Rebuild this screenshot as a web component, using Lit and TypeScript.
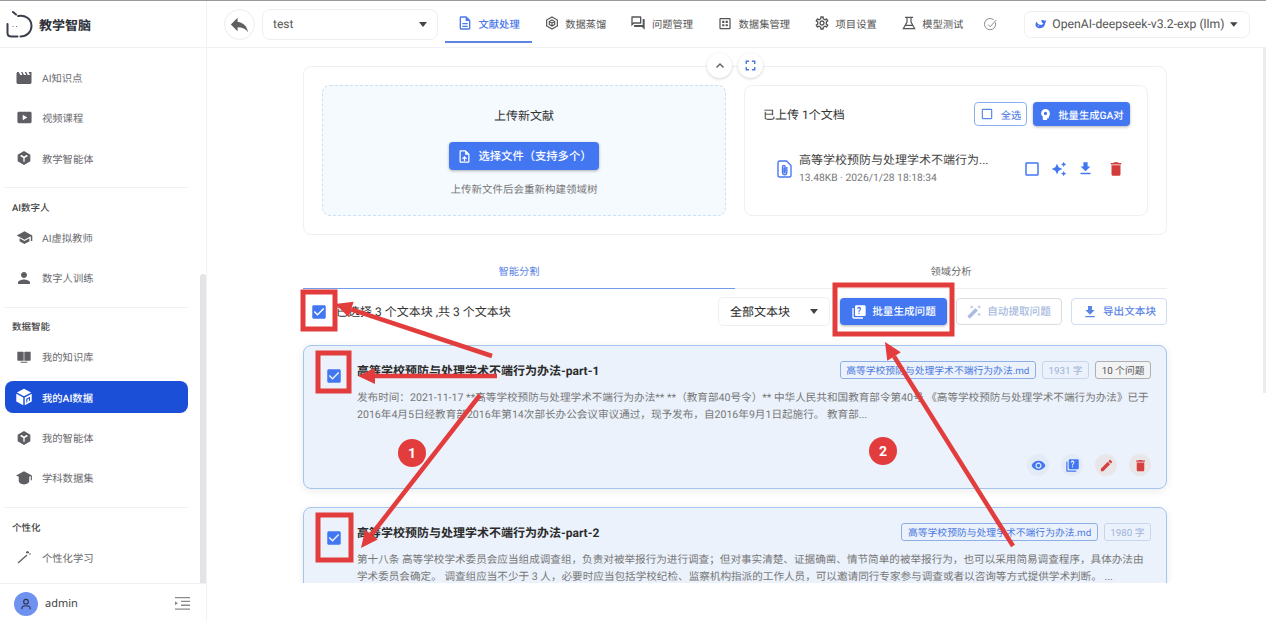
import { LitElement, css, html, svg } from 'lit';
import { customElement } from 'lit/decorators.js';

// material-style icon, filled path on a 24 box
const icon = (d: string, size = 16, color = 'currentColor') => html`
  <svg class="ic" width=${size} height=${size} viewBox="0 0 24 24" fill=${color}>${svg`<path d=${d}></path>`}</svg>
`;

const P = {
  movie: 'M18 4l2 4h-3l-2-4h-2l2 4h-3l-2-4H8l2 4H7L5 4H4c-1.1 0-1.99.9-1.99 2L2 18c0 1.1.9 2 2 2h16c1.1 0 2-.9 2-2V4h-4z',
  play: 'M20 4H4c-1.1 0-2 .9-2 2v12c0 1.1.9 2 2 2h16c1.1 0 2-.9 2-2V6c0-1.1-.9-2-2-2zM9.5 16v-8l6.5 4-6.5 4z',
  hexY: 'M12 1.5 21.5 7v10L12 22.5 2.5 17V7zM7.6 7.2 6.4 9.2 11 12v5.6h2V12l4.6-2.8-1.2-2L12 9.9z',
  school: 'M5 13.18v4L12 21l7-3.82v-4L12 17l-7-3.82zM12 3 1 9l11 6 9-4.91V17h2V9L12 3z',
  person: 'M12 12c2.21 0 4-1.79 4-4s-1.79-4-4-4-4 1.79-4 4 1.79 4 4 4zm0 2c-2.67 0-8 1.34-8 4v2h16v-2c0-2.66-5.33-4-8-4z',
  book: 'M2 4h8.5c.6 0 1 .4 1 1v12.5H3c-.6 0-1-.4-1-1zM22 4h-8.5c-.6 0-1 .4-1 1v12.5H21c.6 0 1-.4 1-1zM7 19h10v1.6H7z',
  cube: 'M12 1 21.500 6 12 11 2.500 6zM1.700 7.600l9.300 5V23l-9.300-5zM22.300 7.600V18L13 23V12.600zM20 11.500l-5 2.700v5.300l1.500-.8v-3.500l2-1.100v3.500l1.500-.8z',
  capFull: 'M12 3 1.500 8.500 5 10.400V16c0 2 3 4.500 7 4.500s7-2.500 7-4.500v-5.600l2-1V15h1.500V8.500z',
  reply: 'M10 9V5l-7 7 7 7v-4.100c5 0 8.500 1.600 11 5.100-1-5-4-10-11-11z',
  doc: 'M8 16h8v2H8zm0-4h8v2H8zm6-10H6c-1.100 0-2 .9-2 2v16c0 1.100.89 2 1.990 2H18c1.100 0 2-.9 2-2V8l-6-6zm4 18H6V4h7v5h5v11z',
  qa: 'M15 4v7H5.170L4 12.170V4h11m1-2H3c-.55 0-1 .45-1 1v14l4-4h10c.55 0 1-.45 1-1V3c0-.55-.45-1-1-1zm5 4h-2v9H6v2c0 .55.45 1 1 1h11l4 4V7c0-.55-.45-1-1-1z',
  grid: 'M19 3H5c-1.100 0-2 .9-2 2v14c0 1.100.9 2 2 2h14c1.100 0 2-.9 2-2V5c0-1.100-.9-2-2-2zm0 16H5V5h14v14zM7.500 7.500h3.500V11H7.500zM13 7.500h3.500V11H13zM7.500 13h3.500v3.500H7.500zM13 13h3.500v3.500H13z',
  gear: 'M19.430 12.980c.04-.32.07-.64.07-.98 0-.34-.03-.66-.07-.98l2.110-1.650c.19-.15.24-.42.12-.64l-2-3.460c-.09-.16-.26-.25-.44-.25-.06 0-.12.01-.17.03l-2.490 1c-.52-.4-1.080-.73-1.690-.98l-.38-2.650C14.460 2.180 14.250 2 14 2h-4c-.25 0-.46.18-.49.42l-.38 2.650c-.61.25-1.170.59-1.690.98l-2.490-1c-.06-.02-.12-.03-.18-.03-.17 0-.34.09-.43.25l-2 3.460c-.13.22-.07.49.12.64l2.110 1.650c-.04.32-.07.65-.07.98 0 .33.03.66.07.98l-2.110 1.650c-.19.15-.24.42-.12.64l2 3.460c.09.16.26.25.44.25.06 0 .12-.01.17-.03l2.490-1c.52.4 1.080.73 1.690.98l.38 2.650c.03.24.24.42.49.42h4c.25 0 .46-.18.49-.42l.38-2.650c.61-.25 1.170-.59 1.690-.98l2.490 1c.06.02.12.03.18.03.17 0 .34-.09.43-.25l2-3.460c.12-.22.07-.49-.12-.64l-2.110-1.650zm-1.980-1.710c.04.31.05.52.05.73 0 .21-.02.43-.05.73l-.14 1.130.89.7 1.080.84-.7 1.210-1.270-.51-1.040-.42-.9.68c-.43.32-.84.56-1.250.73l-1.060.43-.16 1.130-.2 1.350h-1.400l-.19-1.350-.16-1.130-1.060-.43c-.43-.18-.83-.41-1.230-.71l-.91-.7-1.060.43-1.270.51-.7-1.210 1.080-.84.89-.7-.14-1.130c-.03-.31-.05-.54-.05-.74s.02-.43.05-.73l.14-1.130-.89-.7-1.080-.84.7-1.210 1.270.51 1.040.42.9-.68c.43-.32.84-.56 1.250-.73l1.060-.43.16-1.130.2-1.350h1.390l.19 1.350.16 1.130 1.060.43c.43.18.83.41 1.230.71l.91.7 1.060-.43 1.270-.51.7 1.210-1.070.85-.89.7.14 1.130zM12 8c-2.210 0-4 1.790-4 4s1.790 4 4 4 4-1.790 4-4-1.790-4-4-4zm0 6c-1.100 0-2-.9-2-2s.9-2 2-2 2 .9 2 2-.9 2-2 2z',
  full: 'M7 14H5v5h5v-2H7v-3zm-2-4h2V7h3V5H5v5zm12 7h-3v2h5v-5h-2v3zM14 5v2h3v3h2V5h-5z',
  upload: 'M14 2H6c-1.100 0-1.990.9-1.990 2L4 20c0 1.100.89 2 1.990 2H18c1.100 0 2-.9 2-2V8l-6-6zm4 18H6V4h7v5h5v11zM8 15.010l1.410 1.410L11 14.840V19h2v-4.160l1.590 1.590L16 15.010 12.010 11 8 15.010z',
  bulb: 'M12 2c-4.400 0-8 3.400-8 7.800 0 2.700 1.300 4.700 3 6.100V21c0 .6.4 1 1 1h6c.6 0 1-.4 1-1v-2h1.500c1 0 1.800-.8 1.800-1.800V14.500H20l-.3-1.500C20 12 20 11 20 9.800 20 5.400 16.400 2 12 2zm0 5a3 3 0 1 1 0 6 3 3 0 0 1 0-6z',
  box: 'M19 5v14H5V5h14m0-2H5c-1.100 0-2 .9-2 2v14c0 1.100.9 2 2 2h14c1.100 0 2-.9 2-2V5c0-1.100-.9-2-2-2z',
  checked: 'M19 3H5c-1.110 0-2 .9-2 2v14c0 1.100.89 2 2 2h14c1.110 0 2-.9 2-2V5c0-1.100-.89-2-2-2zm-9 14l-5-5 1.410-1.410L10 14.170l7.590-7.590L19 8l-9 9z',
  sparkle: 'M19 9l1.250-2.750L23 5l-2.750-1.250L19 1l-1.250 2.750L15 5l2.750 1.250L19 9zm-7.500.5L9 4 6.500 9.500 1 12l5.500 2.500L9 20l2.500-5.500L17 12l-5.500-2.500zM19 15l-1.250 2.750L15 19l2.750 1.250L19 23l1.250-2.750L23 19l-2.750-1.250L19 15z',
  download: 'M19 9h-4V3H9v6H5l7 7 7-7zM5 18v2h14v-2H5z',
  trash: 'M6 19c0 1.100.9 2 2 2h8c1.100 0 2-.9 2-2V7H6v12zM19 4h-3.500l-1-1h-5l-1 1H5v2h14V4z',
  quiz: 'M4 6H2v14c0 1.100.9 2 2 2h14v-2H4V6zm16-4H8c-1.100 0-2 .9-2 2v12c0 1.100.9 2 2 2h12c1.100 0 2-.9 2-2V4c0-1.100-.9-2-2-2zm-7.990 13c-.59 0-1.050-.47-1.050-1.050 0-.59.47-1.040 1.050-1.040.59 0 1.040.45 1.040 1.040-.01.58-.45 1.050-1.040 1.050zm2.500-6.170c-.63.93-1.230 1.210-1.560 1.810-.13.24-.18.4-.18 1.180h-1.520c0-.41-.06-1.080.26-1.650.41-.73 1.180-1.160 1.630-1.800.48-.68.21-1.940-1.140-1.940-.88 0-1.320.67-1.500 1.230l-1.370-.57C9.720 4.550 10.820 4 12.010 4c1.090 0 2.130.54 2.650 1.340.37.58.58 1.530.1 2.490z',
  eye: 'M12 4.500C7 4.500 2.730 7.610 1 12c1.730 4.390 6 7.500 11 7.500s9.270-3.110 11-7.500c-1.730-4.390-6-7.500-11-7.500zM12 17c-2.760 0-5-2.240-5-5s2.240-5 5-5 5 2.240 5 5-2.240 5-5 5zm0-8c-1.660 0-3 1.340-3 3s1.340 3 3 3 3-1.340 3-3-1.340-3-3-3z',
  edit: 'M3 17.250V21h3.750L17.810 9.940l-3.750-3.750L3 17.250zM20.710 7.040c.39-.39.39-1.020 0-1.410l-2.340-2.340c-.39-.39-1.020-.39-1.410 0l-1.830 1.830 3.750 3.750 1.830-1.830z',
  wand: 'M7.500 5.600 10 7 8.600 4.500 10 2 7.500 3.400 5 2l1.400 2.500L5 7zm12 9.800L17 14l1.400 2.500L17 19l2.500-1.400L22 19l-1.400-2.500L22 14zM22 2l-2.500 1.400L17 2l1.400 2.500L17 7l2.500-1.400L22 7l-1.400-2.500zm-7.630 5.290a1 1 0 0 0-1.410 0L1.290 18.960a1 1 0 0 0 0 1.410l2.340 2.340c.39.39 1.020.39 1.410 0L16.700 11.050a1 1 0 0 0 0-1.410l-2.330-2.350z',
};

const caret = html`<svg class="caret" width="8" height="5" viewBox="0 0 8 5"><path d="M0 0h8L4 5z" fill="#444"></path></svg>`;

const logo = html`
  <svg width="27" height="27" viewBox="0 0 27 27" fill="none" stroke="#3b3f4a" stroke-width="2" stroke-linecap="round">
    <path d="M12 5c7-1.500 13.500 3 13.500 10 0 6-5 10.500-11 10.500"></path>
    <path d="M1.500 13v9c0 2.500 1.500 3.500 4 3.500h6"></path>
    <path d="M7 1 10 3.500"></path>
    <path d="M7 15.500h.1M10.500 15.500h.1" stroke-width=".8"></path>
  </svg>
`;

const distill = html`
  <svg class="ic" width="16" height="16" viewBox="0 0 24 24" fill="none" stroke="currentColor" stroke-width="1.800">
    <path d="M12 3 20 7.500v9L12 21l-8-4.500v-9z"></path>
    <path d="M8 9.800 12 7.500l4 2.300v4.400l-4 2.300-4-2.300zM8 9.800l4 2.300 4-2.300M12 12.100v4.400"></path>
  </svg>
`;

const flask = html`
  <svg class="ic" width="16" height="16" viewBox="0 0 24 24" fill="none" stroke="currentColor" stroke-width="1.800">
    <path d="M6 3.500h12M9 3.500v7L3.500 20.500h17L15 10.500v-7M7 15.500h10"></path>
  </svg>
`;

const whale = html`
  <svg width="12" height="10" viewBox="0 0 24 20">
    <path
      fill="#4a6ff0"
      fill-rule="evenodd"
      d="M23.500 1.500c-1 .6-1.800 1.200-2.500 2C19 1.500 16 1 13.500 2 13 5 15 7.500 17.500 8.500c-1 2.500-3.500 4-7 3.200C7 11 5 8 3.500 5 1 7.500 0 11 2 14.500c2.500 4 8 5.500 13 3.500 4-1.700 6-5 6-8.500 1.500-2 2.500-4.500 2.500-8zM7 12.500a1.200 1.200 0 1 1 0 2.400 1.200 1.200 0 0 1 0-2.400z"
    ></path>
  </svg>
`;

const clip = html`
  <svg class="ic" width="15" height="18" viewBox="0 0 15 18" fill="none" stroke="#4a7af0" stroke-width="1.400">
    <path d="M1 2.500C1 1.600 1.600 1 2.500 1H9.500L14 5.500V15.500c0 .9-.6 1.500-1.500 1.500h-10C1.600 17 1 16.400 1 15.500z"></path>
    <path d="M9.800 7v5.500c0 3-4.300 3-4.300 0V6.800c0-1.800 2.600-1.800 2.600 0v5.400c0 .7-1 .7-1 0V7.500"></path>
  </svg>
`;

type NavItem = { label: string; icon: unknown; active?: boolean };
type NavGroup = { title?: string; items: NavItem[] };

const hexIcon = icon(P.hexY, 16);

const thinWand = html`
  <svg class="ic" width="16" height="16" viewBox="0 0 16 16" fill="none" stroke="currentColor" stroke-width="1.300">
    <path d="M2 14 11 6M11.500 2v2M10 3.500h3M14 4.500v1M13.500 5h1"></path>
  </svg>
`;

const nav: NavGroup[] = [
  {
    items: [
      { label: 'AI知识点', icon: icon(P.movie, 18) },
      { label: '视频课程', icon: icon(P.play, 17) },
      { label: '教学智能体', icon: hexIcon },
    ],
  },
  {
    title: 'AI数字人',
    items: [
      { label: 'AI虚拟教师', icon: icon(P.school, 17) },
      { label: '数字人训练', icon: icon(P.person, 18) },
    ],
  },
  {
    title: '数据智能',
    items: [
      { label: '我的知识库', icon: icon(P.book, 16) },
      { label: '我的AI数据', icon: icon(P.cube, 18), active: true },
      { label: '我的智能体', icon: hexIcon },
      { label: '学科数据集', icon: icon(P.capFull, 18) },
    ],
  },
  {
    title: '个性化',
    items: [{ label: '个性化学习', icon: thinWand }],
  },
];

const tabs = [
  { label: '文献处理', icon: icon(P.doc, 16), active: true },
  { label: '数据蒸馏', icon: distill },
  { label: '问题管理', icon: icon(P.qa, 16) },
  { label: '数据集管理', icon: icon(P.grid, 15) },
  { label: '项目设置', icon: icon(P.gear, 16) },
  { label: '模型测试', icon: flask },
];

const cards = [
  {
    title: '高等学校预防与处理学术不端行为办法-part-1',
    file: '高等学校预防与处理学术不端行为办法.md',
    words: '1931 字',
    questions: '10 个问题',
    lines: [
      '发布时间：2021-11-17 **高等学校预防与处理学术不端行为办法** **（教育部40号令）** 中华人民共和国教育部令第40号 《高等学校预防与处理学术不端行为办法》已于',
      '2016年4月5日经教育部2016年第14次部长办公会议审议通过，现予发布，自2016年9月1日起施行。 教育部...',
    ],
    actions: true,
  },
  {
    title: '高等学校预防与处理学术不端行为办法-part-2',
    file: '高等学校预防与处理学术不端行为办法.md',
    words: '1980 字',
    lines: [
      '第十八条  高等学校学术委员会应当组成调查组，负责对被举报行为进行调查；但对事实清楚、证据确凿、情节简单的被举报行为，也可以采用简易调查程序，具体办法由',
      '学术委员会确定。 调查组应当不少于 3 人，必要时应当包括学校纪检、监察机构指派的工作人员，可以邀请同行专家参与调查或者以咨询等方式提供学术判断。 ...',
    ],
  },
];

// red annotations drawn over the page
const RED = '#e23c3c';
const boxes = [
  [303, 292, 32, 37],
  [318, 353, 31, 38],
  [318, 515, 33, 45],
  [835, 285, 117, 49],
];
const arrows = [
  [492, 356, 335, 304],
  [497, 376, 358, 376],
  [480, 395, 361, 548],
  [1013, 546, 885, 342],
];

const arrowShape = ([x1, y1, x2, y2]: number[]) => {
  const a = Math.atan2(y2 - y1, x2 - x1);
  const len = 17;
  const w = 8;
  const bx = x2 - Math.cos(a) * len;
  const by = y2 - Math.sin(a) * len;
  const nx = -Math.sin(a) * w;
  const ny = Math.cos(a) * w;
  return svg`
    <line x1=${x1} y1=${y1} x2=${bx} y2=${by} stroke=${RED} stroke-width="4.500"></line>
    <polygon points="${x2},${y2} ${bx + nx},${by + ny} ${bx - nx},${by - ny}" fill=${RED}></polygon>
  `;
};

@customElement('app-root')
export class AppRoot extends LitElement {
  static override styles = css`
    :host {
      display: block;
      position: relative;
      width: 1266px;
      height: 621px;
      overflow: hidden;
      background: #fff;
      color: #2b2b2b;
      font-family: Roboto, 'Noto Sans CJK SC', sans-serif;
      font-size: 12px;
      text-rendering: geometricPrecision;
    }

    .ic {
      flex: none;
      display: block;
    }

    .topline {
      height: 1px;
      background: #9a9a9a;
    }

    .shell {
      display: flex;
      height: 620px;
    }

    /* sidebar */
    .side {
      position: relative;
      flex: none;
      width: 206px;
      border-right: 1px solid #f1f1f3;
      display: flex;
      flex-direction: column;
    }

    .brand {
      flex: none;
      height: 47px;
      box-sizing: border-box;
      border-bottom: 1px solid #f0f0f2;
      display: flex;
      align-items: center;
      gap: 6px;
      padding-left: 6px;
      font-size: 13px;
      font-weight: 700;
      color: #2c2f38;
    }

    .side-list {
      flex: 1;
      overflow: hidden;
      padding: 13.5px 18px 0 5px;
    }

    .group {
      display: flow-root;
    }

    .group + .group {
      border-top: 1px solid #f1f1f3;
      margin-top: 5px;
    }

    .group-title {
      height: 14px;
      line-height: 14px;
      margin: 13.500px 0 5.500px 7px;
      font-size: 9.5px;
      font-weight: 500;
      color: #444;
    }

    .nav-item {
      height: 32px;
      margin-bottom: 8.3px;
      border-radius: 8px;
      display: flex;
      align-items: center;
      padding-left: 11px;
      color: #6a6a6e;
      font-size: 10.3px;
    }

    .nav-icon {
      width: 16px;
      margin-right: 10px;
      display: flex;
      justify-content: center;
      color: #5e5e63;
    }

    .nav-item.active {
      background: #1b4fd8;
      color: #fff;
      font-weight: 500;
    }

    .nav-item.active .nav-icon {
      color: #fff;
    }

    .side-thumb {
      position: absolute;
      left: 200px;
      top: 273px;
      width: 6px;
      height: 309px;
      border-radius: 3px 3px 0 0;
      background: #e4e4e6;
    }

    .user {
      flex: none;
      height: 38px;
      box-sizing: border-box;
      border-top: 1px solid #f0f0f2;
      display: flex;
      align-items: center;
      padding: 2px 16px 0 14px;
      font-family: 'Noto Sans', 'Noto Sans CJK SC', sans-serif;
      font-size: 11px;
      color: #444;
    }

    .avatar {
      width: 24px;
      height: 24px;
      border-radius: 50%;
      background: #6e92ee;
      color: #2d3550;
      display: flex;
      align-items: center;
      justify-content: center;
      margin-right: 7px;
    }

    .collapse {
      margin-left: auto;
    }

    /* main column */
    .main {
      flex: 1;
      min-width: 0;
      position: relative;
    }

    .header {
      height: 47px;
      box-sizing: border-box;
      border-bottom: 1px solid #f0f0f2;
      display: flex;
      align-items: center;
      padding: 0 16px 0 17px;
    }

    .back {
      width: 31px;
      height: 31px;
      box-sizing: border-box;
      border: 1px solid #ececee;
      border-radius: 50%;
      display: flex;
      align-items: center;
      justify-content: center;
      color: #5f5f62;
      margin-right: 7px;
    }

    .project {
      width: 176px;
      height: 31px;
      box-sizing: border-box;
      border: 1px solid #efeff1;
      border-radius: 8px;
      display: flex;
      align-items: center;
      justify-content: space-between;
      padding: 0 10px;
      color: #555;
      margin-right: 7px;
    }

    .tab {
      height: 38px;
      box-sizing: border-box;
      padding: 0 12px;
      display: flex;
      align-items: center;
      gap: 5.5px;
      font-size: 10.3px;
      color: #555;
      border-bottom: 2px solid transparent;
    }

    .tab .ic {
      width: 16px;
    }

    .tab.active {
      color: #4a78e8;
      font-weight: 500;
      border-bottom-color: #5b86e6;
    }

    .done {
      margin-left: 8px;
      color: #8a8a8a;
    }

    .model {
      margin-left: auto;
      width: 226px;
      height: 27px;
      box-sizing: border-box;
      border: 1px solid #efeff1;
      border-radius: 7px;
      display: flex;
      align-items: center;
      padding: 0 11px 0 10px;
      gap: 6px;
      font-size: 12.2px;
      color: #555;
      white-space: nowrap;
    }

    .model .caret {
      margin-left: auto;
    }

    .view {
      height: 535px;
      overflow: hidden;
      padding: 18px 3px 0 0;
      box-sizing: border-box;
    }

    .page-thumb {
      position: absolute;
      right: 0;
      top: 47px;
      width: 3px;
      height: 345px;
      background: #ececee;
    }

    .content {
      width: 864px;
      margin: 0 auto;
    }

    .panel {
      position: relative;
      box-sizing: border-box;
      height: 169px;
      border: 1px solid #f0f0f2;
      border-radius: 8px;
      padding: 18px;
      display: grid;
      grid-template-columns: 1fr 1fr;
      gap: 18px;
    }

    .round {
      position: absolute;
      top: -14px;
      width: 25px;
      height: 25px;
      border-radius: 50%;
      background: #fff;
      box-shadow: 0 1px 3px rgba(0, 0, 0, 0.18);
      display: flex;
      align-items: center;
      justify-content: center;
      color: #666;
    }

    .round.up {
      left: 403px;
    }

    .round.fit {
      left: 434px;
      color: #4a78e8;
    }

    .drop {
      border: 1px dashed #cddff5;
      border-radius: 8px;
      background: #f5faff;
      display: flex;
      flex-direction: column;
      align-items: center;
      padding-top: 21px;
      box-sizing: border-box;
    }

    .drop-title {
      line-height: 18px;
      color: #333;
    }

    .btn {
      box-sizing: border-box;
      display: flex;
      align-items: center;
      justify-content: center;
      border-radius: 4px;
      font-size: 10.6px;
      font-weight: 500;
    }

    .btn.solid {
      background: #4377f2;
      color: #fff;
      box-shadow: 0 1px 3px rgba(0, 0, 0, 0.3);
    }

    .btn.pick {
      width: 150px;
      height: 28px;
      margin-top: 17px;
      gap: 7px;
      font-size: 11.3px;
    }

    .hint {
      margin-top: 12px;
      line-height: 16px;
      font-size: 10.5px;
      color: #777;
    }

    .files {
      border: 1px solid #f0f0f2;
      border-radius: 8px;
      padding: 16px 17px 0 18px;
      box-sizing: border-box;
    }

    .files-head {
      display: flex;
      align-items: center;
      height: 24px;
      color: #333;
    }

    .btn.all {
      margin-left: auto;
      width: 53px;
      height: 24px;
      border: 1px solid #8db0ec;
      color: #5b86e6;
      gap: 7px;
      font-size: 10.3px;
    }

    .btn.batch {
      margin-left: 6px;
      width: 97px;
      height: 24px;
      gap: 6px;
      font-size: 10.3px;
    }

    .file-row {
      display: flex;
      align-items: center;
      margin-top: 25.500px;
      padding-left: 14px;
    }

    .file-text {
      margin-left: 7px;
      width: 220px;
    }

    .file-name {
      line-height: 17px;
      color: #444;
    }

    .file-meta {
      line-height: 17px;
      font-size: 10.3px;
      color: #777;
    }

    .file-actions {
      display: flex;
      align-items: center;
      gap: 10px;
      color: #4377f2;
      margin-left: 4px;
    }

    .del {
      margin-left: 3px;
      color: #d33c3c;
    }

    .subtabs {
      margin-top: 18px;
      display: grid;
      grid-template-columns: 1fr 1fr;
      height: 36px;
      box-sizing: border-box;
      border-bottom: 1px solid #eeeeef;
      font-size: 10.3px;
    }

    .subtab {
      display: flex;
      align-items: center;
      justify-content: center;
      color: #666;
    }

    .subtab.active {
      color: #5b86e6;
      border-bottom: 1.500px solid #6f9be8;
      margin-bottom: -1px;
    }

    .toolbar {
      margin-top: 8px;
      height: 29px;
      display: flex;
      align-items: center;
      padding-left: 7px;
    }

    .toolbar .count {
      margin-left: 8px;
      color: #333;
    }

    .filter {
      margin-left: auto;
      width: 112px;
      height: 29px;
      box-sizing: border-box;
      border: 1px solid #f0f0f2;
      border-radius: 5px;
      display: flex;
      align-items: center;
      justify-content: space-between;
      padding: 0 11px;
    }

    .btn.gen {
      margin-left: 10px;
      width: 107px;
      height: 27px;
      gap: 5px;
    }

    .btn.auto {
      margin-left: 9px;
      width: 106px;
      height: 27px;
      gap: 5px;
      border: 1px solid #dcdcde;
      color: #a9bbe0;
    }

    .btn.export {
      margin-left: 9px;
      width: 96px;
      height: 27px;
      gap: 5px;
      border: 1px solid #cfdcf3;
      color: #5b86e6;
    }

    .card {
      margin-top: 19px;
      box-sizing: border-box;
      border: 1px solid #a4c5ec;
      border-radius: 8px;
      background: #ebf2fc;
      box-shadow: 0 2px 8px rgba(0, 0, 0, 0.08);
      padding: 15px 15px 12px 21px;
      display: flex;
      gap: 14px;
    }

    .card + .card {
      margin-top: 18px;
    }

    .card-check {
      margin-top: 6px;
    }

    .card-body {
      flex: 1;
      min-width: 0;
      display: flex;
      flex-direction: column;
    }

    .card-head {
      height: 18px;
      display: flex;
      align-items: center;
      gap: 6px;
    }

    .card-title {
      margin-right: auto;
      font-weight: 700;
      color: #2b2b2b;
    }

    .tag {
      height: 18px;
      box-sizing: border-box;
      border: 1px solid #8fb0e6;
      border-radius: 3px;
      padding: 0 5.500px;
      display: flex;
      align-items: center;
      font-size: 9.8px;
      color: #4a78e0;
    }

    .tag.words {
      border-color: #c7d6ec;
      color: #9db3d8;
    }

    .tag.count {
      border-color: #b0b0b2;
      background: #f2f3f5;
      color: #555;
    }

    .card-text {
      margin-top: 9.500px;
      line-height: 17px;
      font-size: 10.6px;
      color: #777;
      white-space: nowrap;
    }

    .card-actions {
      margin-top: 31.5px;
      display: flex;
      justify-content: flex-end;
      gap: 12px;
    }

    .act {
      width: 22px;
      height: 22px;
      border-radius: 50%;
      display: flex;
      align-items: center;
      justify-content: center;
      background: #e3ebf8;
      color: #4377f2;
    }

    .act.red {
      background: #e8e6e8;
      color: #d64040;
    }

    .marks {
      position: absolute;
      left: 0;
      top: 0;
      pointer-events: none;
    }

    .marks text {
      font-family: Roboto, sans-serif;
      font-weight: 700;
      font-size: 14px;
    }
  `;

  private renderSide() {
    return html`
      <aside class="side">
        <div class="brand">${logo}<span>教学智脑</span></div>
        <div class="side-list">
          ${nav.map(
            (g) => html`
              <div class="group">
                ${g.title ? html`<div class="group-title">${g.title}</div>` : ''}
                ${g.items.map(
                  (it) => html`
                    <div class="nav-item ${it.active ? 'active' : ''}">
                      <span class="nav-icon">${it.icon}</span>${it.label}
                    </div>
                  `,
                )}
              </div>
            `,
          )}
        </div>
        <div class="side-thumb"></div>
        <div class="user">
          <span class="avatar">
            <svg width="14" height="14" viewBox="0 0 24 24" fill="none" stroke="currentColor" stroke-width="2">
              <circle cx="12" cy="8" r="4"></circle>
              <path d="M5 21v-2c0-3 3-4 7-4s7 1 7 4v2"></path>
            </svg>
          </span>
          admin
          <svg class="collapse" width="15" height="13" viewBox="0 0 15 13" fill="#8a8a8c">
            <path d="M0 0h15v1.300H0zM6 3.800h9v1.300H6zM6 7.600h9v1.300H6zM0 11.500h15v1.300H0zM0 4.300 3 6.300 0 8.300z"></path>
          </svg>
        </div>
      </aside>
    `;
  }

  private renderHeader() {
    return html`
      <header class="header">
        <div class="back">${icon(P.reply, 23)}</div>
        <div class="project"><span>test</span>${caret}</div>
        ${tabs.map(
          (t) => html`<div class="tab ${t.active ? 'active' : ''}">${t.icon}<span>${t.label}</span></div>`,
        )}
        <svg class="ic done" width="15" height="15" viewBox="0 0 24 24" fill="none" stroke="currentColor" stroke-width="1.600">
          <path d="M20 9a9 9 0 1 1-3-4.600M8 12l3.500 3.500L21 5"></path>
        </svg>
        <div class="model">${whale}<span>OpenAI-deepseek-v3.2-exp (llm)</span>${caret}</div>
      </header>
    `;
  }

  private renderPanel() {
    return html`
      <section class="panel">
        <div class="round up">
          <svg width="12" height="12" viewBox="0 0 12 12" fill="none" stroke="currentColor" stroke-width="1.500">
            <path d="M2.500 7.500 6 4l3.500 3.500"></path>
          </svg>
        </div>
        <div class="round fit">${icon(P.full, 17)}</div>
        <div class="drop">
          <div class="drop-title">上传新文献</div>
          <div class="btn solid pick">${icon(P.upload, 15)}选择文件（支持多个）</div>
          <div class="hint">上传新文件后会重新构建领域树</div>
        </div>
        <div class="files">
          <div class="files-head">
            <span>已上传 1个文档</span>
            <div class="btn all">${icon(P.box, 14)}全选</div>
            <div class="btn solid batch">${icon(P.bulb, 13)}批量生成GA对</div>
          </div>
          <div class="file-row">
            ${clip}
            <div class="file-text">
              <div class="file-name">高等学校预防与处理学术不端行为...</div>
              <div class="file-meta">13.48KB · 2026/1/28 18:18:34</div>
            </div>
            <div class="file-actions">
              ${icon(P.box, 18)}${icon(P.sparkle, 16)}${icon(P.download, 17)}
              <span class="del">${icon(P.trash, 18)}</span>
            </div>
          </div>
        </div>
      </section>
    `;
  }

  private renderCard(c: (typeof cards)[number]) {
    return html`
      <article class="card">
        <span class="card-check">${icon(P.checked, 18, '#4377f2')}</span>
        <div class="card-body">
          <div class="card-head">
            <span class="card-title">${c.title}</span>
            <span class="tag">${c.file}</span>
            <span class="tag words">${c.words}</span>
            ${c.questions ? html`<span class="tag count">${c.questions}</span>` : ''}
          </div>
          <div class="card-text">${c.lines.map((l) => html`<div>${l}</div>`)}</div>
          ${c.actions
            ? html`
                <div class="card-actions">
                  <span class="act">${icon(P.eye, 15)}</span>
                  <span class="act">${icon(P.quiz, 15)}</span>
                  <span class="act red">${icon(P.edit, 15)}</span>
                  <span class="act red">${icon(P.trash, 15)}</span>
                </div>
              `
            : ''}
        </div>
      </article>
    `;
  }

  private renderMarks() {
    return html`
      <svg class="marks" width="1266" height="621" viewBox="0 0 1266 621" fill="none">
        ${boxes.map(
          ([x, y, w, h]) => svg`<rect x=${x} y=${y} width=${w} height=${h} stroke=${RED} stroke-width="5"></rect>`,
        )}
        ${arrows.map(arrowShape)}
        <circle cx="412" cy="453" r="14" fill=${RED}></circle>
        <text x="412" y="458" fill="#fff" text-anchor="middle">1</text>
        <circle cx="883" cy="451" r="14" fill=${RED}></circle>
        <text x="883" y="456" fill="#fff" text-anchor="middle">2</text>
      </svg>
    `;
  }

  override render() {
    return html`
      <div class="topline"></div>
      <div class="shell">
        ${this.renderSide()}
        <div class="main">
          ${this.renderHeader()}
          <div class="view">
            <div class="content">
              ${this.renderPanel()}
              <div class="subtabs">
                <div class="subtab active">智能分割</div>
                <div class="subtab">领域分析</div>
              </div>
              <div class="toolbar">
                ${icon(P.checked, 18, '#4377f2')}
                <span class="count">已选择 3 个文本块 ,共 3 个文本块</span>
                <div class="filter"><span>全部文本块</span>${caret}</div>
                <div class="btn solid gen">${icon(P.quiz, 16)}批量生成问题</div>
                <div class="btn auto">${icon(P.wand, 15)}自动提取问题</div>
                <div class="btn export">${icon(P.download, 16)}导出文本块</div>
              </div>
              ${cards.map((c) => this.renderCard(c))}
            </div>
          </div>
          <div class="page-thumb"></div>
        </div>
      </div>
      ${this.renderMarks()}
    `;
  }
}
